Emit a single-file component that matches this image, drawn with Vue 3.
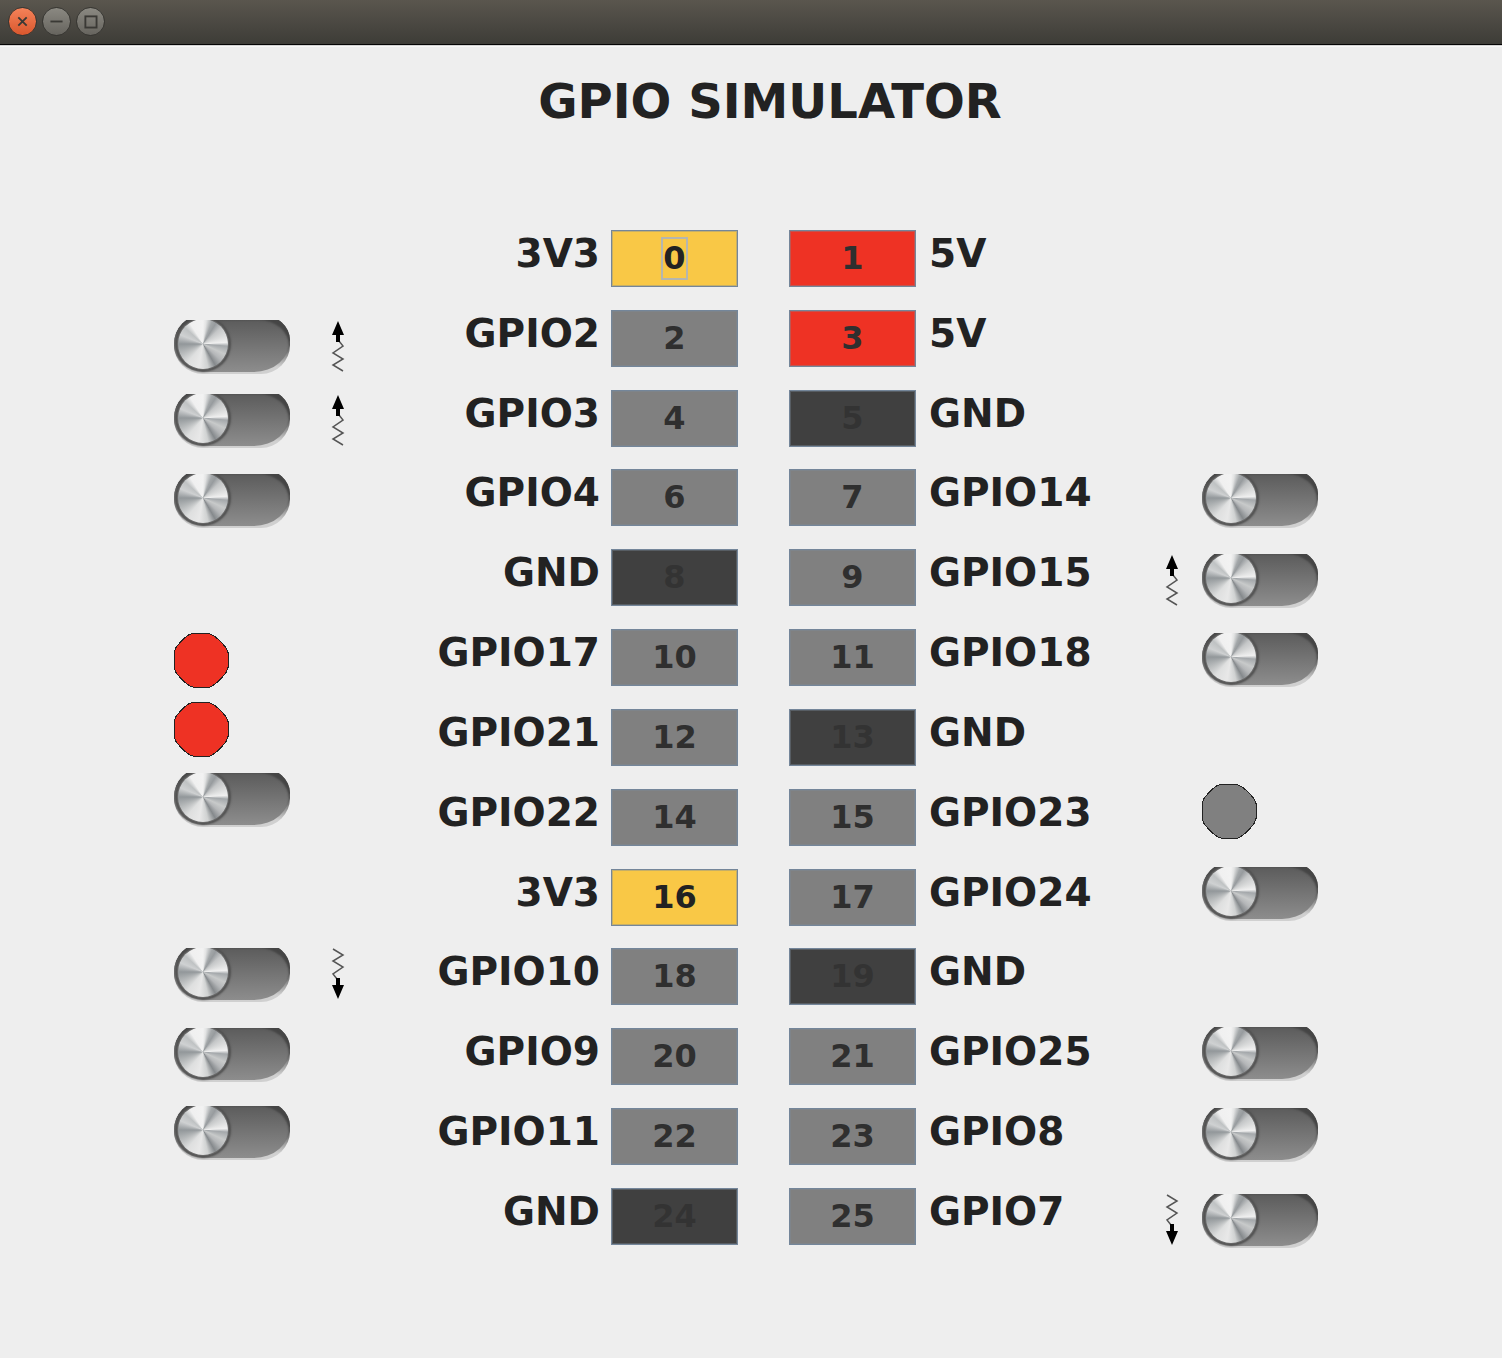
<script setup>
import { ref } from 'vue'

const leftPins = [
  { id: 0, name: '3V3', kind: 'v3' },
  { id: 2, name: 'GPIO2', kind: 'io' },
  { id: 4, name: 'GPIO3', kind: 'io' },
  { id: 6, name: 'GPIO4', kind: 'io' },
  { id: 8, name: 'GND', kind: 'gnd' },
  { id: 10, name: 'GPIO17', kind: 'io' },
  { id: 12, name: 'GPIO21', kind: 'io' },
  { id: 14, name: 'GPIO22', kind: 'io' },
  { id: 16, name: '3V3', kind: 'v3' },
  { id: 18, name: 'GPIO10', kind: 'io' },
  { id: 20, name: 'GPIO9', kind: 'io' },
  { id: 22, name: 'GPIO11', kind: 'io' },
  { id: 24, name: 'GND', kind: 'gnd' }
]

const rightPins = [
  { id: 1, name: '5V', kind: 'v5' },
  { id: 3, name: '5V', kind: 'v5' },
  { id: 5, name: 'GND', kind: 'gnd' },
  { id: 7, name: 'GPIO14', kind: 'io' },
  { id: 9, name: 'GPIO15', kind: 'io' },
  { id: 11, name: 'GPIO18', kind: 'io' },
  { id: 13, name: 'GND', kind: 'gnd' },
  { id: 15, name: 'GPIO23', kind: 'io' },
  { id: 17, name: 'GPIO24', kind: 'io' },
  { id: 19, name: 'GND', kind: 'gnd' },
  { id: 21, name: 'GPIO25', kind: 'io' },
  { id: 23, name: 'GPIO8', kind: 'io' },
  { id: 25, name: 'GPIO7', kind: 'io' }
]

// space: distance from the previous device in the bank
const banks = ref([
  {
    side: 'left',
    devices: [
      { pin: 'GPIO2', type: 'switch', pull: 'up', on: false, space: 91 },
      { pin: 'GPIO3', type: 'switch', pull: 'up', on: false, space: 20 },
      { pin: 'GPIO4', type: 'switch', on: false, space: 26 },
      { pin: 'GPIO17', type: 'led', on: true, space: 105 },
      { pin: 'GPIO21', type: 'led', on: true, space: 14 },
      { pin: 'GPIO22', type: 'switch', on: false, space: 16 },
      { pin: 'GPIO10', type: 'switch', pull: 'down', on: false, space: 121 },
      { pin: 'GPIO9', type: 'switch', on: false, space: 26 },
      { pin: 'GPIO11', type: 'switch', on: false, space: 24 }
    ]
  },
  {
    side: 'right',
    devices: [
      { pin: 'GPIO14', type: 'switch', on: false, space: 245 },
      { pin: 'GPIO15', type: 'switch', pull: 'up', on: false, space: 26 },
      { pin: 'GPIO18', type: 'switch', on: false, space: 25 },
      { pin: 'GPIO23', type: 'led', on: false, space: 97 },
      { pin: 'GPIO24', type: 'switch', on: false, space: 28 },
      { pin: 'GPIO25', type: 'switch', on: false, space: 106 },
      { pin: 'GPIO8', type: 'switch', on: false, space: 27 },
      { pin: 'GPIO7', type: 'switch', pull: 'down', on: false, space: 32 }
    ]
  }
])

const focused = ref(0)
</script>

<template>
  <div class="window">
    <header class="titlebar">
      <button class="ctl close" type="button" aria-label="Close">
        <svg viewBox="0 0 29 29"><path d="M10 10l9 9M19 10l-9 9" /></svg>
      </button>
      <button class="ctl" type="button" aria-label="Minimize">
        <svg viewBox="0 0 29 29"><path d="M8 14.5h13" /></svg>
      </button>
      <button class="ctl" type="button" aria-label="Maximize">
        <svg viewBox="0 0 29 29"><rect x="9" y="9" width="12" height="12" /></svg>
      </button>
    </header>

    <h1>GPIO SIMULATOR</h1>

    <main class="board">
      <section v-for="bank in banks" :key="bank.side" class="bank" :class="bank.side">
        <div
          v-for="d in bank.devices"
          :key="d.pin"
          class="device"
          :style="{ marginTop: d.space + 'px' }"
        >
          <label v-if="d.type === 'switch'" class="switch">
            <input v-model="d.on" type="checkbox" role="switch" :aria-label="d.pin" />
          </label>
          <svg
            v-else
            class="led"
            :class="{ lit: d.on }"
            viewBox="0 0 55 55"
            role="img"
            :aria-label="d.pin"
          >
            <path d="M19.500 .5h15l5 2 5 4 4 4 4 5 1.500 4v15l-2 5-4 5-4 4-5 4-4 2h-15l-5-2-5-4-4-4-4-5-2-5v-15l2-5 4-5 4-4 5-4z" />
          </svg>
          <svg v-if="d.pull" class="pull" :class="d.pull" viewBox="0 0 14 52" aria-hidden="true">
            <path class="coil" d="M8 21l4 5-10 7 10 6-10 6 10 6" />
            <path d="M7 1l6 14h-4v7h-4v-7H1z" />
          </svg>
        </div>
      </section>

      <section class="pins left-pins">
        <div v-for="p in leftPins" :key="p.id" class="pin">
          <label :for="'pin' + p.id">{{ p.name }}</label>
          <button
            :id="'pin' + p.id"
            type="button"
            :class="[p.kind, { focused: focused === p.id }]"
            @click="focused = p.id"
          >
            <span>{{ p.id }}</span>
          </button>
        </div>
      </section>

      <section class="pins right-pins">
        <div v-for="p in rightPins" :key="p.id" class="pin">
          <button
            :id="'pin' + p.id"
            type="button"
            :class="[p.kind, { focused: focused === p.id }]"
            @click="focused = p.id"
          >
            <span>{{ p.id }}</span>
          </button>
          <label :for="'pin' + p.id">{{ p.name }}</label>
        </div>
      </section>
    </main>
  </div>
</template>

<style>
body {
  margin: 0;
  background: #eeeeee;
}
</style>

<style scoped>
.window {
  box-sizing: border-box;
  min-height: 100vh;
  background: #eeeeee;
  color: #222222;
  font-family: "DejaVu Sans", Verdana, sans-serif;
  font-weight: 700;
}

.titlebar {
  box-sizing: border-box;
  display: flex;
  gap: 5px;
  height: 45px;
  padding: 7px 8px 0;
  background: linear-gradient(#5a564e, #3d3c37);
  border-bottom: 1px solid #050505;
  box-shadow: 0 1px 0 #d4d4d4, 0 2px 0 #f8f8f8;
}

.ctl {
  width: 29px;
  height: 29px;
  padding: 0;
  border: 1px solid #353430;
  border-radius: 50%;
  background: linear-gradient(#8b8982, #66645e);
}

.ctl.close {
  background: linear-gradient(#f58259, #d9572d);
}

.ctl svg {
  display: block;
  width: 27px;
  height: 27px;
  fill: none;
  stroke: #3a3935;
  stroke-width: 2;
}

h1 {
  margin: 0;
  padding: 28px 0 101px 38px;
  font-size: 48px;
  line-height: 56px;
  text-align: center;
}

.board {
  display: grid;
  grid-template-columns: 1fr auto auto 1fr;
  column-gap: 51px;
  padding-bottom: 112px;
}

.bank {
  grid-row: 1;
  display: flex;
  flex-direction: column;
  margin-top: -1px;
}

.bank.left {
  grid-column: 1;
  padding-left: 174px;
  margin-right: -51px;
}

.bank.right {
  grid-column: 4;
  padding-right: 184px;
  margin-left: -51px;
}

.device {
  display: flex;
  gap: 41px;
}

.right .device {
  flex-direction: row-reverse;
  gap: 23px;
}

.right .led {
  margin-right: 61px;
}

.switch {
  display: flex;
  align-items: flex-end;
  width: 116px;
  height: 54px;
  overflow: hidden;
}

.switch input {
  appearance: none;
  position: relative;
  flex: none;
  width: 116px;
  height: 59px;
  margin: 0;
  border-radius: 29px;
  background: linear-gradient(#555555 50%, #d0d0d0 88%);
}

.switch input::before {
  content: "";
  position: absolute;
  inset: 0 0 2px;
  border-radius: 29px 29px 36px 29px / 29px 25px 32px 28px;
  background: linear-gradient(#575757, #8d8d8d);
  box-shadow: inset -2px 6px 2px -1px #454545;
}

.switch input::after {
  content: "";
  position: absolute;
  top: 4px;
  left: 4px;
  width: 50px;
  height: 50px;
  border-radius: 50%;
  background:
    conic-gradient(
      #f2f2f2 0deg, #e2e3e3 8deg, #a3a7a9 22deg, #979b9e 32deg,
      #c4c6c7 48deg, #dcdddd 70deg, #f0f0f0 86deg, #a4a8ab 95deg,
      #c8caca 115deg, #b4b6b8 132deg, #85898c 150deg, #d0d2d2 168deg,
      #e8e8e8 190deg, #dedfdf 220deg, #b8bbbc 245deg, #92979a 270deg,
      #cfd1d2 292deg, #bfc2c3 312deg, #f0f0f0 328deg, #f2f2f2 360deg
    );
  box-shadow: 0 0 1px 1px #6c6c6c, 0 0 2px 3px #505050;
}

.switch input:checked::after {
  left: 62px;
}

.led {
  width: 55px;
  height: 55px;
  fill: #808080;
  stroke: #222222;
  stroke-width: 1;
  shape-rendering: crispEdges;
}

.led.lit {
  fill: #ee3224;
}

.pull {
  width: 14px;
  height: 52px;
}

.pull.down {
  transform: rotate(180deg);
}

.coil {
  fill: none;
  stroke: #555555;
  stroke-width: 1.500;
}

.pins {
  grid-row: 1;
  display: flex;
  flex-direction: column;
  justify-content: space-between;
  height: 1015px;
}

.left-pins {
  grid-column: 2;
  margin-left: -51px;
}

.right-pins {
  grid-column: 3;
  margin-right: -76px;
}

.pin {
  display: flex;
  gap: 13px;
}

.pin label {
  width: 171px;
  font-size: 39px;
  line-height: 48px;
}

.left-pins .pin {
  gap: 11px;
}

.left-pins label {
  width: 173px;
  text-align: right;
}

.pin button {
  flex: none;
  width: 127px;
  height: 57px;
  padding: 0;
  border: 1px solid #74869a;
  box-shadow: inset 0 0 0 1px rgba(122, 138, 153, 0.4);
  font: inherit;
  font-size: 32px;
  color: #2f2f2f;
}

.pin button span {
  display: inline-block;
  line-height: 39px;
}

.pin button.focused span {
  box-shadow: 0 0 0 2px #b5b6b0;
}

.pin button.v3 {
  background: #f9c846;
  color: #222222;
}

.pin button.v5 {
  background: #ee3224;
}

.pin button.io {
  background: #808080;
}

.pin button.gnd {
  background: #404040;
  color: #333333;
}
</style>
